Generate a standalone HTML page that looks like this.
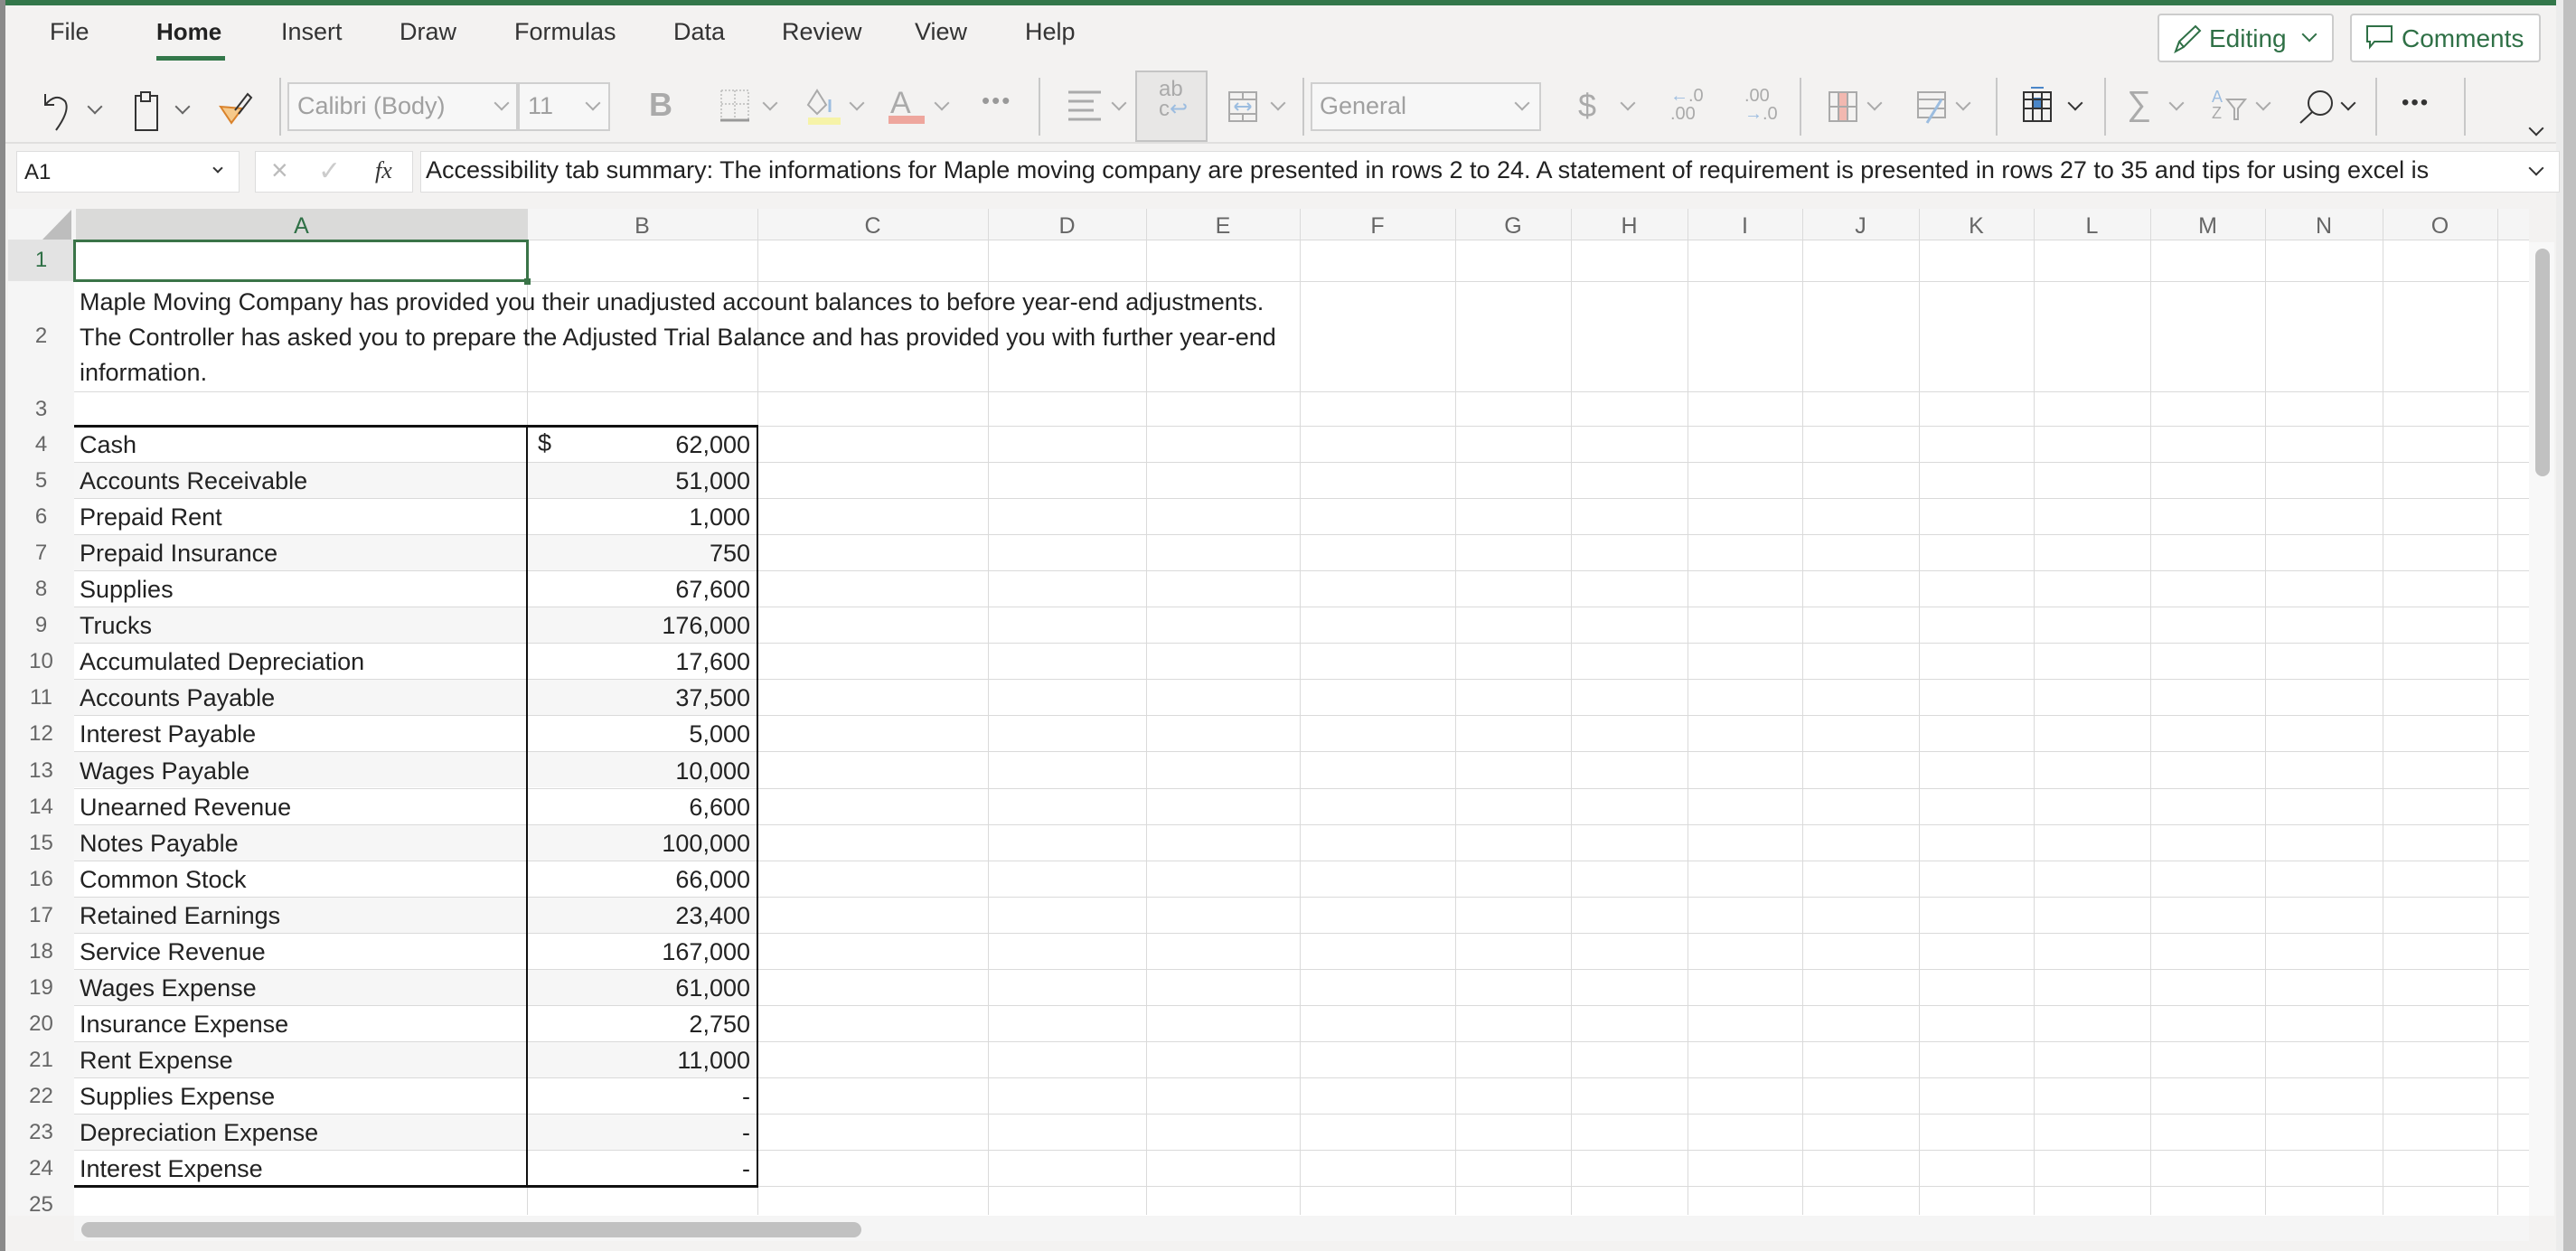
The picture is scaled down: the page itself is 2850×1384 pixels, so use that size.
<!DOCTYPE html>
<html><head><meta charset="utf-8"><style>
*{margin:0;padding:0;box-sizing:border-box}
body{width:2850px;height:1384px;overflow:hidden;background:#f3f2f1;font-family:"Liberation Sans",sans-serif;position:relative;color:#222}
.a{position:absolute}
.tab{position:absolute;top:20px;font-size:27px;color:#333}
.chev{position:absolute;width:12px;height:12px;border-right:2px solid #666;border-bottom:2px solid #666;transform:rotate(45deg)}
.sep{position:absolute;top:78px;width:2px;height:72px;background:#c8c8c8}
.vl{position:absolute;top:231px;width:1px;height:1113px;background:#dadada}
.hl{position:absolute;left:82px;width:2716px;height:1px;background:#dadada}
.rh{position:absolute;left:9px;width:73px;text-align:center;font-size:24px;color:#666}
.ch{position:absolute;top:236px;font-size:25px;color:#666;text-align:center}
.ca{position:absolute;left:88px;font-size:27px;color:#222;white-space:nowrap}
.cb{position:absolute;left:586px;width:244px;text-align:right;font-size:27px;color:#222}
.band{position:absolute;left:82px;width:756px;height:40px;background:#f6f6f6}
</style></head><body>
<div class="a" style="left:0;top:0;width:2828px;height:6px;background:#33774a"></div>
<div class="a" style="left:0;top:0;width:6px;height:1384px;background:#8a8a8a"></div>
<div class="a" style="left:2828px;top:0;width:8px;height:1384px;background:#ececec"></div>
<div class="a" style="left:2836px;top:0;width:14px;height:1384px;background:#c0c0c0"></div>

<div class="tab" style="left:55px">File</div>
<div class="tab" style="left:173px;color:#222;font-weight:bold;font-size:26px">Home</div>
<div class="a" style="left:173px;top:62px;width:76px;height:5px;background:#33774a"></div>
<div class="tab" style="left:311px">Insert</div>
<div class="tab" style="left:442px">Draw</div>
<div class="tab" style="left:569px">Formulas</div>
<div class="tab" style="left:745px">Data</div>
<div class="tab" style="left:865px">Review</div>
<div class="tab" style="left:1012px">View</div>
<div class="tab" style="left:1134px">Help</div>

<div class="a" style="left:2387px;top:15px;width:195px;height:54px;background:#fff;border:2px solid #ccc;border-radius:4px"></div>
<svg class="a" style="left:2403px;top:26px" width="34" height="34" viewBox="0 0 34 34"><path d="M4 31 L8 20 L26 3 L31 8 L13 26 Z M8 20 L13 26" fill="none" stroke="#2f7046" stroke-width="2"/></svg>
<div class="a" style="left:2444px;top:27px;font-size:28px;color:#2f7046">Editing</div>
<div class="chev" style="left:2549px;top:32px;border-color:#2f7046"></div>
<div class="a" style="left:2600px;top:15px;width:211px;height:54px;background:#fff;border:2px solid #ccc;border-radius:4px"></div>
<svg class="a" style="left:2617px;top:27px" width="32" height="30" viewBox="0 0 32 30"><path d="M2 2 H29 V19 H10 L5 25 V19 H2 Z" fill="none" stroke="#2f7046" stroke-width="2"/></svg>
<div class="a" style="left:2657px;top:27px;font-size:28px;color:#2f7046">Comments</div>

<!-- toolbar -->
<svg class="a" style="left:48px;top:100px" width="40" height="46" viewBox="0 0 40 46"><path d="M2 4 V16 H12 M2 16 Q14 2 24 12 Q30 22 14 44" fill="none" stroke="#333" stroke-width="2"/></svg>
<div class="chev" style="left:99px;top:112px"></div>
<svg class="a" style="left:148px;top:100px" width="30" height="46" viewBox="0 0 30 46"><path d="M2 6 H8 V2 H18 V6 H26 V44 H2 Z M8 6 V12 H18 V6" fill="none" stroke="#333" stroke-width="2"/></svg>
<div class="chev" style="left:196px;top:112px"></div>
<svg class="a" style="left:242px;top:100px" width="38" height="40" viewBox="0 0 38 40"><path d="M2 18 L14 36 L26 20 Z" fill="#f6c98a" stroke="#d9822b" stroke-width="2"/><path d="M18 22 L32 4 L36 8 L22 26" fill="none" stroke="#333" stroke-width="2"/></svg>
<div class="sep" style="left:309px;top:86px;height:64px"></div>
<div class="a" style="left:318px;top:91px;width:255px;height:54px;border:2px solid #cfcfcf;background:#f7f7f7"></div>
<div class="a" style="left:329px;top:102px;font-size:27px;color:#a0a0a0">Calibri (Body)</div>
<div class="chev" style="left:549px;top:108px;border-color:#aaa"></div>
<div class="a" style="left:573px;top:91px;width:102px;height:54px;border:2px solid #cfcfcf;background:#f7f7f7"></div>
<div class="a" style="left:584px;top:102px;font-size:27px;color:#a0a0a0">11</div>
<div class="chev" style="left:650px;top:108px;border-color:#aaa"></div>
<div class="a" style="left:718px;top:95px;font-size:36px;font-weight:bold;color:#aaa">B</div>
<svg class="a" style="left:796px;top:98px" width="34" height="38" viewBox="0 0 34 38"><path d="M2 2 H32 V34 M2 2 V34 M17 2 V34 M2 17 H32" fill="none" stroke="#bbb" stroke-width="1.5" stroke-dasharray="2 2"/><path d="M1 35 H33" stroke="#999" stroke-width="3"/></svg>
<div class="chev" style="left:846px;top:108px;border-color:#aaa"></div>
<svg class="a" style="left:890px;top:96px" width="44" height="42" viewBox="0 0 44 42"><path d="M14 4 L4 20 L14 30 L24 20 Z" fill="none" stroke="#aaa" stroke-width="2"/><path d="M28 14 V28" stroke="#9cbde0" stroke-width="3"/><rect x="4" y="34" width="36" height="8" fill="#f6f3a8"/></svg>
<div class="chev" style="left:942px;top:108px;border-color:#aaa"></div>
<div class="a" style="left:985px;top:95px;font-size:34px;color:#aaa">A</div>
<div class="a" style="left:983px;top:128px;width:40px;height:9px;background:#eea69d"></div>
<div class="chev" style="left:1036px;top:108px;border-color:#aaa"></div>
<div class="a" style="left:1086px;top:96px;font-size:26px;color:#999;letter-spacing:2px">•••</div>
<div class="sep" style="left:1149px;top:86px;height:64px"></div>
<svg class="a" style="left:1180px;top:100px" width="40" height="36" viewBox="0 0 40 36"><path d="M2 2 H38 M2 12 H30 M2 22 H30 M2 32 H38" stroke="#aaa" stroke-width="3"/></svg>
<div class="chev" style="left:1232px;top:108px;border-color:#aaa"></div>
<div class="a" style="left:1256px;top:78px;width:80px;height:79px;border:2px solid #c4c4c4;background:#e8e7e6"></div>
<div class="a" style="left:1282px;top:88px;font-size:24px;color:#aaa;line-height:22px">ab<br>c<span style="color:#9cbde0">↩</span></div>
<svg class="a" style="left:1358px;top:100px" width="34" height="36" viewBox="0 0 34 36"><path d="M2 2 H32 V34 H2 Z M2 10 H32 M2 26 H32 M17 2 V10 M17 26 V34" fill="none" stroke="#aaa" stroke-width="2"/><path d="M8 18 H26 M8 18 l4 -4 M8 18 l4 4 M26 18 l-4 -4 M26 18 l-4 4" stroke="#9cbde0" stroke-width="2" fill="none"/></svg>
<div class="chev" style="left:1408px;top:108px;border-color:#aaa"></div>
<div class="sep" style="left:1441px;top:86px;height:64px"></div>
<div class="a" style="left:1450px;top:91px;width:255px;height:54px;border:2px solid #cfcfcf;background:#f7f7f7"></div>
<div class="a" style="left:1460px;top:102px;font-size:27px;color:#a0a0a0">General</div>
<div class="chev" style="left:1678px;top:108px;border-color:#aaa"></div>
<div class="a" style="left:1746px;top:96px;font-size:36px;color:#aaa">$</div>
<div class="chev" style="left:1795px;top:108px;border-color:#aaa"></div>
<div class="a" style="left:1848px;top:96px;font-size:20px;color:#aaa;line-height:20px"><span style="color:#9cbde0">←</span>.0<br>.00</div>
<div class="a" style="left:1930px;top:96px;font-size:20px;color:#aaa;line-height:20px">.00<br><span style="color:#9cbde0">→</span>.0</div>
<div class="sep" style="left:1991px;top:86px;height:64px"></div>
<svg class="a" style="left:2022px;top:100px" width="34" height="36" viewBox="0 0 34 36"><rect x="12" y="2" width="10" height="32" fill="#f2b8b0"/><path d="M2 2 H32 V34 H2 Z M12 2 V34 M22 2 V34 M2 18 H32" fill="none" stroke="#aaa" stroke-width="2"/></svg>
<div class="chev" style="left:2068px;top:108px;border-color:#aaa"></div>
<svg class="a" style="left:2120px;top:100px" width="36" height="40" viewBox="0 0 36 40"><path d="M2 2 H32 V30 H2 Z M2 10 H32 M2 20 H32" fill="none" stroke="#aaa" stroke-width="2"/><path d="M12 36 L28 10" stroke="#9cbde0" stroke-width="3"/></svg>
<div class="chev" style="left:2166px;top:108px;border-color:#aaa"></div>
<div class="sep" style="left:2208px;top:86px;height:64px"></div>
<svg class="a" style="left:2237px;top:96px" width="34" height="40" viewBox="0 0 34 40"><rect x="12" y="12" width="10" height="12" fill="#4a86c8"/><path d="M2 6 H32 V38 H2 Z M12 6 V38 M22 6 V38 M2 14 H32 M2 24 H32" fill="none" stroke="#333" stroke-width="2"/><path d="M10 1 H24" stroke="#4a86c8" stroke-width="2"/></svg>
<div class="chev" style="left:2290px;top:108px;border-color:#333"></div>
<div class="sep" style="left:2328px;top:86px;height:64px"></div>
<div class="a" style="left:2353px;top:94px;font-size:38px;color:#aaa">∑</div>
<div class="chev" style="left:2402px;top:108px;border-color:#aaa"></div>
<div class="a" style="left:2447px;top:98px;font-size:18px;color:#9cbde0;line-height:18px">A<br><span style="color:#aaa">Z</span></div>
<svg class="a" style="left:2462px;top:108px" width="24" height="26" viewBox="0 0 24 26"><path d="M2 2 H22 L14 12 V24 H10 V12 Z" fill="none" stroke="#aaa" stroke-width="2"/></svg>
<div class="chev" style="left:2498px;top:108px;border-color:#aaa"></div>
<svg class="a" style="left:2543px;top:98px" width="40" height="40" viewBox="0 0 40 40"><circle cx="24" cy="16" r="13" fill="none" stroke="#333" stroke-width="2"/><path d="M15 26 L2 38" stroke="#333" stroke-width="2"/></svg>
<div class="chev" style="left:2592px;top:108px;border-color:#333"></div>
<div class="sep" style="left:2628px;top:86px;height:64px"></div>
<div class="a" style="left:2657px;top:100px;font-size:24px;color:#333;letter-spacing:2px">•••</div>
<div class="sep" style="left:2726px;top:86px;height:64px"></div>
<div class="chev" style="left:2800px;top:136px;border-color:#333"></div>
<div class="a" style="left:6px;top:157px;width:2822px;height:2px;background:#e0dfde"></div>

<!-- formula bar -->
<div class="a" style="left:18px;top:167px;width:247px;height:46px;background:#fff;border:1px solid #ddd"></div>
<div class="a" style="left:27px;top:177px;font-size:24px;color:#222">A1</div>
<div class="chev" style="left:237px;top:182px;width:8px;height:8px;border-color:#333"></div>
<div class="a" style="left:282px;top:167px;width:175px;height:46px;background:#fff;border:1px solid #ddd"></div>
<div class="a" style="left:300px;top:170px;font-size:32px;color:#bbb">×</div>
<div class="a" style="left:352px;top:172px;font-size:30px;color:#ccc">✓</div>
<div class="a" style="left:415px;top:174px;font-size:26px;font-style:italic;font-family:'Liberation Serif',serif;color:#333">fx</div>
<div class="a" style="left:465px;top:167px;width:2367px;height:46px;background:#fff;border:1px solid #ddd"></div>
<div class="a" style="left:471px;top:173px;font-size:27px;color:#222;white-space:nowrap">Accessibility tab summary: The informations for Maple moving company are presented in rows 2 to 24. A statement of requirement is presented in rows 27 to 35 and tips for using excel is</div>
<div class="chev" style="left:2800px;top:180px;border-color:#333"></div>

<!-- grid -->
<div class="a" style="left:9px;top:231px;width:2789px;height:34px;background:#f5f5f5"></div>
<div class="a" style="left:84px;top:231px;width:500px;height:34px;background:#dadad9"></div>
<div class="a" style="left:9px;top:265px;width:2789px;height:1080px;background:#fff"></div>
<div class="a" style="left:9px;top:265px;width:73px;height:1080px;background:#f5f5f5"></div>
<div class="a" style="left:9px;top:265px;width:73px;height:46px;background:#e3e3e3"></div>
<svg class="a" style="left:47px;top:232px" width="32" height="33"><path d="M32 0 V33 H0 Z" fill="#bdbdbd"/></svg>

<div class="band" style="top:511px"></div><div class="band" style="top:591px"></div><div class="band" style="top:671px"></div><div class="band" style="top:751px"></div><div class="band" style="top:831px"></div><div class="band" style="top:912px"></div><div class="band" style="top:992px"></div><div class="band" style="top:1072px"></div><div class="band" style="top:1152px"></div><div class="band" style="top:1232px"></div>

<div class="vl" style="left:583px"></div><div class="vl" style="left:838px"></div><div class="vl" style="left:1093px"></div><div class="vl" style="left:1268px"></div><div class="vl" style="left:1438px"></div><div class="vl" style="left:1610px"></div><div class="vl" style="left:1738px"></div><div class="vl" style="left:1867px"></div><div class="vl" style="left:1994px"></div><div class="vl" style="left:2123px"></div><div class="vl" style="left:2250px"></div><div class="vl" style="left:2379px"></div><div class="vl" style="left:2506px"></div><div class="vl" style="left:2636px"></div><div class="vl" style="left:2763px"></div>

<div class="hl" style="top:265px"></div><div class="hl" style="top:311px"></div><div class="hl" style="top:433px"></div><div class="hl" style="top:471px"></div><div class="hl" style="top:511px"></div><div class="hl" style="top:551px"></div><div class="hl" style="top:591px"></div><div class="hl" style="top:631px"></div><div class="hl" style="top:671px"></div><div class="hl" style="top:711px"></div><div class="hl" style="top:751px"></div><div class="hl" style="top:791px"></div><div class="hl" style="top:831px"></div><div class="hl" style="top:872px"></div><div class="hl" style="top:912px"></div><div class="hl" style="top:952px"></div><div class="hl" style="top:992px"></div><div class="hl" style="top:1032px"></div><div class="hl" style="top:1072px"></div><div class="hl" style="top:1112px"></div><div class="hl" style="top:1152px"></div><div class="hl" style="top:1192px"></div><div class="hl" style="top:1232px"></div><div class="hl" style="top:1272px"></div><div class="hl" style="top:1312px"></div>

<div class="ch" style="left:84px;width:499px;color:#2f7046">A</div>
<div class="ch" style="left:583px;width:255px">B</div>
<div class="ch" style="left:838px;width:255px">C</div>
<div class="ch" style="left:1093px;width:175px">D</div>
<div class="ch" style="left:1268px;width:170px">E</div>
<div class="ch" style="left:1438px;width:172px">F</div>
<div class="ch" style="left:1610px;width:128px">G</div>
<div class="ch" style="left:1738px;width:129px">H</div>
<div class="ch" style="left:1867px;width:127px">I</div>
<div class="ch" style="left:1994px;width:129px">J</div>
<div class="ch" style="left:2123px;width:127px">K</div>
<div class="ch" style="left:2250px;width:129px">L</div>
<div class="ch" style="left:2379px;width:127px">M</div>
<div class="ch" style="left:2506px;width:130px">N</div>
<div class="ch" style="left:2636px;width:127px">O</div>

<div class="rh" style="top:274px;color:#2f7046">1</div>
<div class="rh" style="top:358px">2</div>
<div class="rh" style="top:439px">3</div>
<div class="rh" style="top:478px">4</div><div class="rh" style="top:518px">5</div><div class="rh" style="top:558px">6</div><div class="rh" style="top:598px">7</div><div class="rh" style="top:638px">8</div><div class="rh" style="top:678px">9</div><div class="rh" style="top:718px">10</div><div class="rh" style="top:758px">11</div><div class="rh" style="top:798px">12</div><div class="rh" style="top:839px">13</div><div class="rh" style="top:879px">14</div><div class="rh" style="top:919px">15</div><div class="rh" style="top:959px">16</div><div class="rh" style="top:999px">17</div><div class="rh" style="top:1039px">18</div><div class="rh" style="top:1079px">19</div><div class="rh" style="top:1119px">20</div><div class="rh" style="top:1159px">21</div><div class="rh" style="top:1199px">22</div><div class="rh" style="top:1239px">23</div><div class="rh" style="top:1279px">24</div><div class="rh" style="top:1319px">25</div>

<div class="ca" style="top:315px;line-height:39px">Maple Moving Company has provided you their unadjusted account balances to before year-end adjustments.<br>The Controller has asked you to prepare the Adjusted Trial Balance and has provided you with further year-end<br>information.</div>

<div class="ca" style="top:477px">Cash</div><div class="cb" style="top:477px">62,000</div><div class="a" style="left:595px;top:475px;font-size:27px">$</div>
<div class="ca" style="top:517px">Accounts Receivable</div><div class="cb" style="top:517px">51,000</div>
<div class="ca" style="top:557px">Prepaid Rent</div><div class="cb" style="top:557px">1,000</div>
<div class="ca" style="top:597px">Prepaid Insurance</div><div class="cb" style="top:597px">750</div>
<div class="ca" style="top:637px">Supplies</div><div class="cb" style="top:637px">67,600</div>
<div class="ca" style="top:677px">Trucks</div><div class="cb" style="top:677px">176,000</div>
<div class="ca" style="top:717px">Accumulated Depreciation</div><div class="cb" style="top:717px">17,600</div>
<div class="ca" style="top:757px">Accounts Payable</div><div class="cb" style="top:757px">37,500</div>
<div class="ca" style="top:797px">Interest Payable</div><div class="cb" style="top:797px">5,000</div>
<div class="ca" style="top:838px">Wages Payable</div><div class="cb" style="top:838px">10,000</div>
<div class="ca" style="top:878px">Unearned Revenue</div><div class="cb" style="top:878px">6,600</div>
<div class="ca" style="top:918px">Notes Payable</div><div class="cb" style="top:918px">100,000</div>
<div class="ca" style="top:958px">Common Stock</div><div class="cb" style="top:958px">66,000</div>
<div class="ca" style="top:998px">Retained Earnings</div><div class="cb" style="top:998px">23,400</div>
<div class="ca" style="top:1038px">Service Revenue</div><div class="cb" style="top:1038px">167,000</div>
<div class="ca" style="top:1078px">Wages Expense</div><div class="cb" style="top:1078px">61,000</div>
<div class="ca" style="top:1118px">Insurance Expense</div><div class="cb" style="top:1118px">2,750</div>
<div class="ca" style="top:1158px">Rent Expense</div><div class="cb" style="top:1158px">11,000</div>
<div class="ca" style="top:1198px">Supplies Expense</div><div class="cb" style="top:1198px">-</div>
<div class="ca" style="top:1238px">Depreciation Expense</div><div class="cb" style="top:1238px">-</div>
<div class="ca" style="top:1278px">Interest Expense</div><div class="cb" style="top:1278px">-</div>

<!-- table borders -->
<div class="a" style="left:82px;top:470px;width:757px;height:3px;background:#111"></div>
<div class="a" style="left:82px;top:1311px;width:757px;height:3px;background:#111"></div>
<div class="a" style="left:582px;top:470px;width:2px;height:843px;background:#111"></div>
<div class="a" style="left:837px;top:470px;width:2px;height:843px;background:#111"></div>

<!-- active cell -->
<div class="a" style="left:81px;top:265px;width:504px;height:47px;border:3px solid #3a7448"></div>
<div class="a" style="left:580px;top:308px;width:7px;height:7px;background:#3a7448"></div>

<!-- scrollbars -->
<div class="a" style="left:82px;top:1345px;width:2716px;height:28px;background:#f5f5f5"></div>
<div class="a" style="left:90px;top:1352px;width:863px;height:17px;background:#c1c1c1;border-radius:9px"></div>
<div class="a" style="left:2798px;top:268px;width:28px;height:1077px;background:#f8f8f8"></div>
<div class="a" style="left:2805px;top:275px;width:16px;height:252px;background:#c1c1c1;border-radius:8px"></div>
</body></html>
